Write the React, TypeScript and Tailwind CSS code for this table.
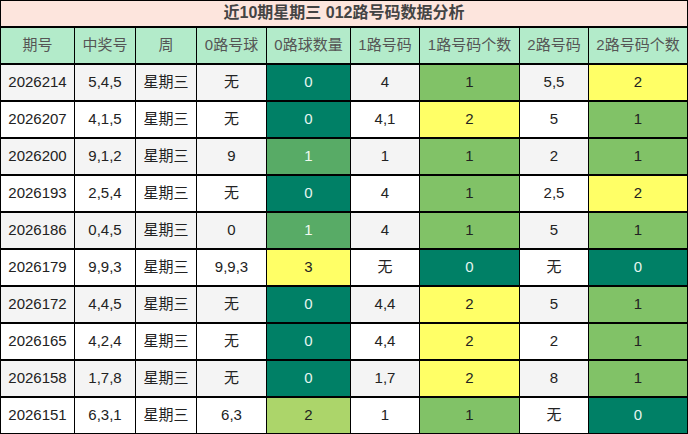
import React from 'react';

type Tone = 'dg' | 'mg' | 'g' | 'lg' | 'y' | '';

const toneClass: Record<string, string> = {
  dg: 'bg-[#008066] text-[#e6f5f0]',
  mg: 'bg-[#58ab66] text-[#f0faf0]',
  g: 'bg-[#81c267] text-[#222]',
  lg: 'bg-[#acd56a] text-[#222]',
  y: 'bg-[#ffff66] text-[#222]',
};

type Row = [string, string, string, string, Tone, string, string, Tone, string, string, Tone];

const rows: Row[] = [
  ['2026214', '5,4,5', '无', '0', 'dg', '4', '1', 'g', '5,5', '2', 'y'],
  ['2026207', '4,1,5', '无', '0', 'dg', '4,1', '2', 'y', '5', '1', 'g'],
  ['2026200', '9,1,2', '9', '1', 'mg', '1', '1', 'g', '2', '1', 'g'],
  ['2026193', '2,5,4', '无', '0', 'dg', '4', '1', 'g', '2,5', '2', 'y'],
  ['2026186', '0,4,5', '0', '1', 'mg', '4', '1', 'g', '5', '1', 'g'],
  ['2026179', '9,9,3', '9,9,3', '3', 'y', '无', '0', 'dg', '无', '0', 'dg'],
  ['2026172', '4,4,5', '无', '0', 'dg', '4,4', '2', 'y', '5', '1', 'g'],
  ['2026165', '4,2,4', '无', '0', 'dg', '4,4', '2', 'y', '2', '1', 'g'],
  ['2026158', '1,7,8', '无', '0', 'dg', '1,7', '2', 'y', '8', '1', 'g'],
  ['2026151', '6,3,1', '6,3', '2', 'lg', '1', '1', 'g', '无', '0', 'dg'],
];

const heads = ['期号', '中奖号', '周', '0路号球', '0路球数量', '1路号码', '1路号码个数', '2路号码', '2路号码个数'];
const widths = [74, 61, 61, 70, 84, 69, 100, 69, 99];

const App: React.FC = () => {
  return (
    <div className="w-[688px] h-[434px] bg-white overflow-hidden" style={{ fontFamily: '"Liberation Sans", "Noto Sans CJK SC", sans-serif' }}>
      <table className="table-fixed border-collapse w-[687px] text-[15px] text-center">
        <colgroup>
          {widths.map((w, i) => (
            <col key={i} style={{ width: w }} />
          ))}
        </colgroup>
        <tbody>
          <tr className="h-[26px]">
            <td colSpan={9} className="border border-b-2 border-black bg-[#fde5dd] text-[#444] font-bold text-[16px] leading-none p-0">
              近10期星期三 012路号码数据分析
            </td>
          </tr>
          <tr className="h-[37px]">
            {heads.map((h) => (
              <td key={h} className="border-x border-y-2 border-black bg-[#b3ebca] text-[#555] p-0 whitespace-nowrap">
                {h}
              </td>
            ))}
          </tr>
          {rows.map((r, i) => {
            const base = i % 2 === 0 ? 'bg-[#f4f4f4] text-[#222]' : 'bg-white text-[#222]';
            const cells: [string, Tone][] = [
              [r[0], ''],
              [r[1], ''],
              ['星期三', ''],
              [r[2], ''],
              [r[3], r[4]],
              [r[5], ''],
              [r[6], r[7]],
              [r[8], ''],
              [r[9], r[10]],
            ];
            return (
              <tr key={r[0]} className="h-[37px]">
                {cells.map(([v, t], j) => (
                  <td key={j} className={`border-x border-y-2 border-black p-0 ${t ? toneClass[t] : base}`}>
                    {v}
                  </td>
                ))}
              </tr>
            );
          })}
        </tbody>
      </table>
    </div>
  );
};

export default App;
